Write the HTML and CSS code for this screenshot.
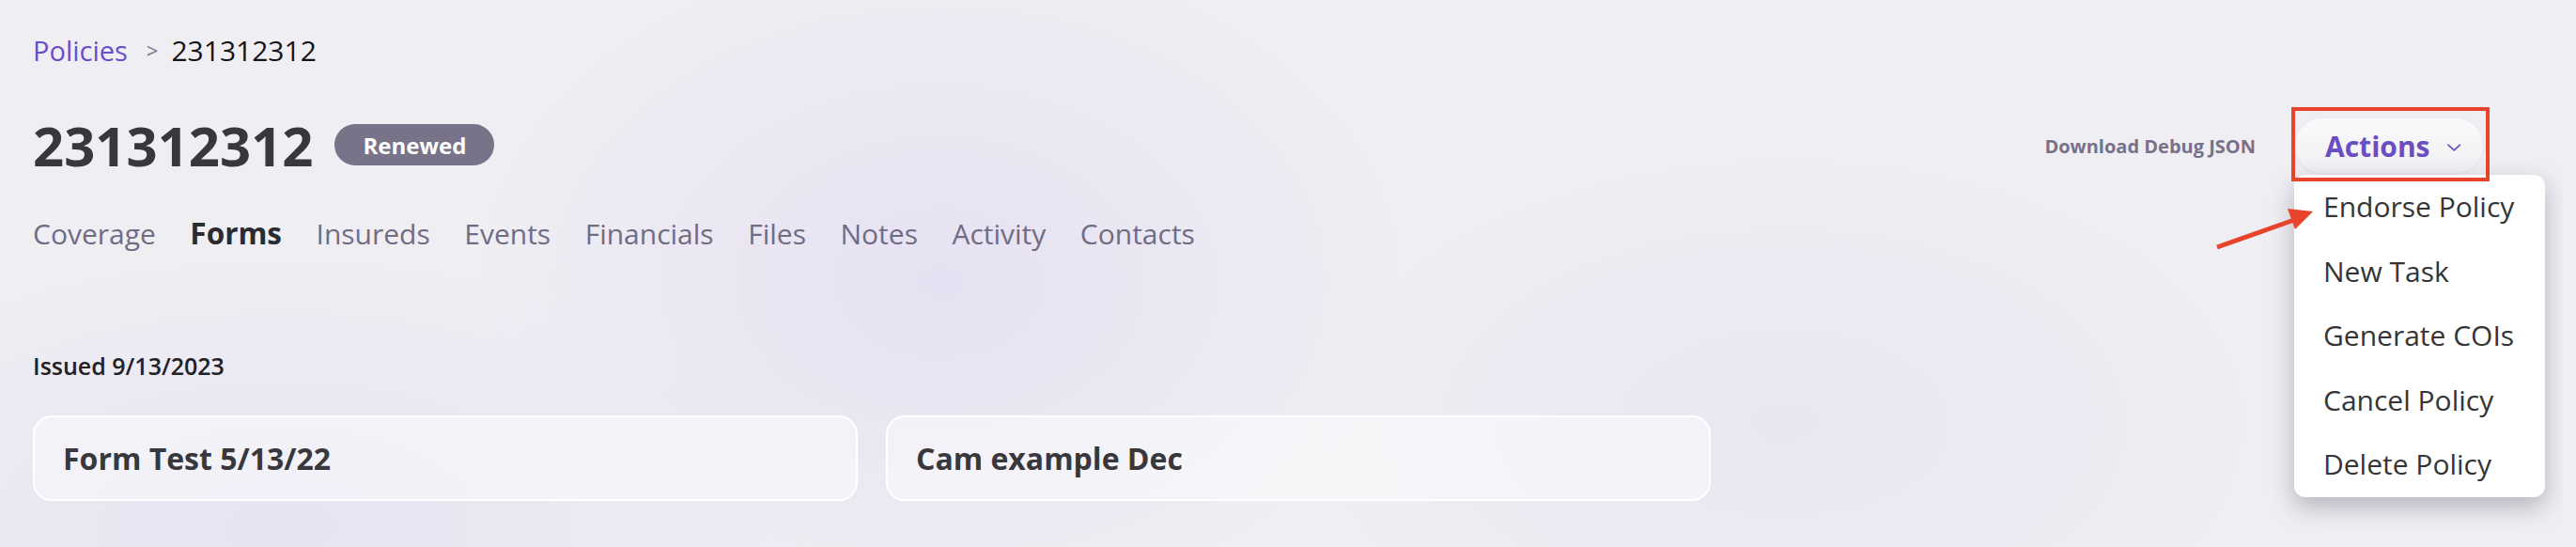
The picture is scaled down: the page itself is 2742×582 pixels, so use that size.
FILE: index.html
```html
<!DOCTYPE html>
<html lang="en">
<head>
<meta charset="utf-8">
<title>Policy 231312312</title>
<link rel="stylesheet" href="styles.css">
</head>
<body>
<div class="page">
  <nav class="crumbs">
    <a class="crumb-link" href="#">Policies</a>
    <span class="crumb-sep">&gt;</span>
    <span class="crumb-current">231312312</span>
  </nav>

  <header class="head">
    <div class="title-wrap">
      <h1 class="title">231312312</h1>
      <span class="badge">Renewed</span>
    </div>
    <div class="head-actions">
      <a class="debug" href="#">Download Debug JSON</a>
      <div class="actions">
        <button class="actions-btn" type="button">
          <span>Actions</span>
          <svg class="chev" width="15" height="8" viewBox="0 0 15 8"><path d="M1 1 L7.5 7 L14 1" fill="none" stroke="#6a4fc2" stroke-width="1.8" stroke-linecap="round" stroke-linejoin="round"/></svg>
        </button>
        <ul class="menu">
          <li class="menu-item">Endorse Policy</li>
          <li class="menu-item">New Task</li>
          <li class="menu-item">Generate COIs</li>
          <li class="menu-item">Cancel Policy</li>
          <li class="menu-item">Delete Policy</li>
        </ul>
        <div class="highlight"></div>
        <svg class="arrow" width="120" height="60" viewBox="0 0 120 60">
          <line x1="4" y1="46" x2="86" y2="17" stroke="#e8442b" stroke-width="5"/>
          <polygon points="79,5 106,8 87,27" fill="#e8442b"/>
        </svg>
      </div>
    </div>
  </header>

  <nav class="tabs">
    <a class="tab" href="#">Coverage</a>
    <a class="tab tab-active" href="#">Forms</a>
    <a class="tab" href="#">Insureds</a>
    <a class="tab" href="#">Events</a>
    <a class="tab" href="#">Financials</a>
    <a class="tab" href="#">Files</a>
    <a class="tab" href="#">Notes</a>
    <a class="tab" href="#">Activity</a>
    <a class="tab" href="#">Contacts</a>
  </nav>

  <section class="forms">
    <div class="issued">Issued 9/13/2023</div>
    <div class="cards">
      <div class="card">Form Test 5/13/22</div>
      <div class="card">Cam example Dec</div>
    </div>
  </section>
</div>
</body>
</html>
```

FILE: styles.css
```css
html, body {
  margin: 0;
  padding: 0;
}
body {
  background: #efeff4;
  font-family: "Open Sans", "Noto Sans", sans-serif;
  width: 2742px;
  height: 582px;
  overflow: hidden;
}
.page {
  width: 2728px;
  height: 582px;
  overflow: hidden;
  box-sizing: border-box;
  padding: 33px 85px 0 35px;
  background:
    radial-gradient(ellipse 700px 500px at 1000px 300px, rgba(226, 220, 242, 0.7), rgba(226, 220, 242, 0) 70%),
    radial-gradient(ellipse 800px 400px at 300px 560px, rgba(228, 222, 242, 0.7), rgba(228, 222, 242, 0) 70%),
    radial-gradient(ellipse 700px 400px at 1900px 450px, rgba(230, 225, 242, 0.6), rgba(230, 225, 242, 0) 70%),
    #efeef3;
}
.crumbs {
  display: flex;
  align-items: center;
  font-size: 29px;
  line-height: 41px;
}
.crumb-link {
  color: #6a4dc8;
  text-decoration: none;
}
.crumb-sep {
  color: #77738a;
  font-size: 22px;
  margin: 0 14px 0 20px;
}
.crumb-current {
  color: #141416;
  font-size: 30px;
}
.head {
  display: flex;
  justify-content: space-between;
  align-items: center;
  margin-top: 40px;
  height: 82px;
}
.title-wrap {
  display: flex;
  align-items: center;
  gap: 23px;
}
.title {
  margin: 0;
  font-size: 58px;
  font-weight: 700;
  line-height: 82px;
  color: #38383c;
}
.badge {
  display: inline-flex;
  align-items: center;
  height: 44px;
  padding: 0 30px;
  border-radius: 22px;
  background: #79738a;
  color: #ffffff;
  font-size: 24px;
  font-weight: 700;
  margin-top: -2px;
}
.head-actions {
  display: flex;
  align-items: center;
  gap: 42px;
}
.debug {
  color: #77718a;
  font-size: 20px;
  font-weight: 700;
  text-decoration: none;
}
.actions {
  position: relative;
}
.actions-btn {
  display: flex;
  align-items: center;
  gap: 18px;
  height: 58px;
  width: 200px;
  box-sizing: border-box;
  padding: 0 24px 0 32px;
  border: none;
  border-radius: 29px;
  background: linear-gradient(#fafafb, #f0eff3);
  box-shadow: 0 1px 3px rgba(60, 60, 80, 0.08);
  font-family: inherit;
  font-size: 30px;
  font-weight: 700;
  color: #6a4fc2;
}
.chev {
  margin-top: 4px;
}
.menu {
  position: absolute;
  left: -1px;
  top: 60px;
  width: 267px;
  margin: 0;
  padding: 0;
  list-style: none;
  background: #ffffff;
  border-radius: 12px;
  box-shadow: 0 10px 26px rgba(30, 30, 50, 0.28);
  z-index: 2;
}
.menu-item {
  padding: 0 0 0 31px;
  height: 68.6px;
  line-height: 68.6px;
  font-size: 30px;
  color: #353538;
  white-space: nowrap;
}
.highlight {
  position: absolute;
  left: -4px;
  top: -12px;
  width: 211px;
  height: 79px;
  box-sizing: border-box;
  border: 4px solid #e8442b;
  z-index: 3;
}
.arrow {
  position: absolute;
  left: -87px;
  top: 91px;
  z-index: 3;
}
.tabs {
  display: flex;
  align-items: baseline;
  gap: 36.5px;
  margin-top: 31px;
  font-size: 30px;
  line-height: 41px;
}
.tab {
  color: #716c84;
  text-decoration: none;
}
.tab-active {
  color: #2b2b30;
  font-weight: 700;
  font-size: 31.5px;
}
.forms {
  margin-top: 104px;
}
.issued {
  font-size: 25px;
  font-weight: 600;
  line-height: 33px;
  color: #222226;
}
.cards {
  display: grid;
  grid-template-columns: repeat(2, 878px);
  gap: 30px;
  margin-top: 36px;
}
.card {
  display: flex;
  align-items: center;
  height: 91px;
  box-sizing: border-box;
  padding: 0 30px;
  border: 2px solid #ffffff;
  border-radius: 20px;
  background: rgba(255, 255, 255, 0.45);
  font-size: 32px;
  font-weight: 700;
  color: #38383c;
}
```
